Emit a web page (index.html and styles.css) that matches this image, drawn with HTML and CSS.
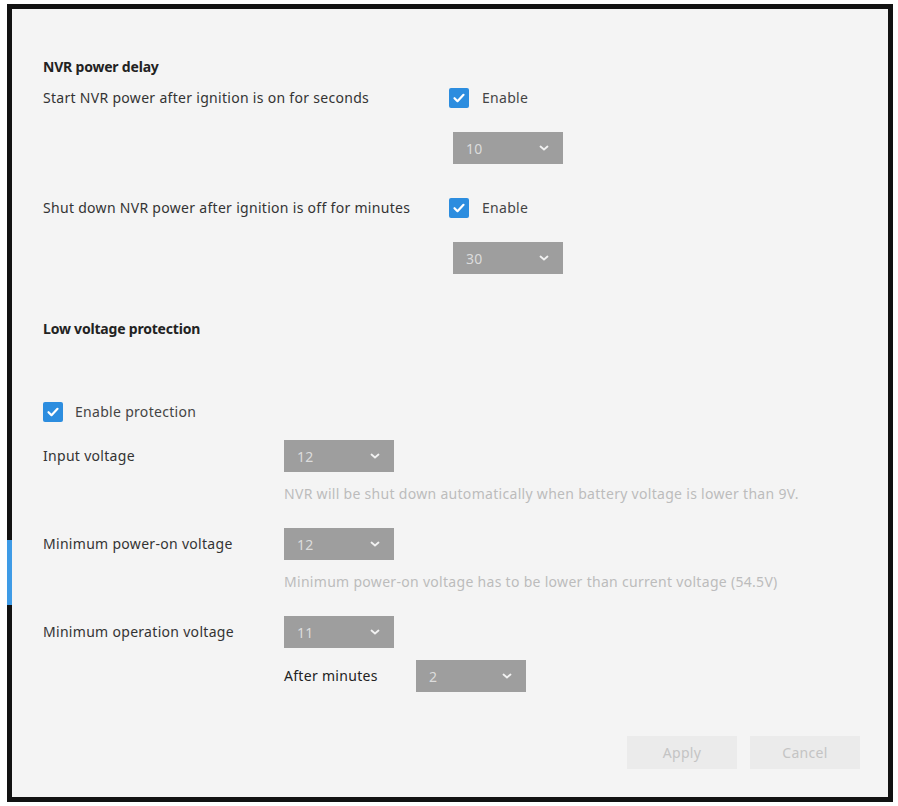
FILE: index.html
```html
<html>
	<head>
		<link rel="stylesheet" href="styles.css">
	</head>
<body>
	<div class="frame">
		<span class="frame-marker"></span>
		<div class="panel">

			<h3 class="section-title">NVR power delay</h3>
			<div class="delay-grid">
				<span class="field-label">Start NVR power after ignition is on for seconds</span>
				<label class="check"><span class="checkbox"><svg viewBox="0 0 20 20" width="20" height="20"><path d="M5.5 10.2l3 3 6-6.4" fill="none" stroke="#fff" stroke-width="2.2" stroke-linecap="round" stroke-linejoin="round"/></svg></span>Enable</label>
				<span></span>
				<div class="select delay-select"><span>10</span><svg class="chevron" viewBox="0 0 10 6" width="10" height="6"><path d="M1.5 1.5l3.5 3 3.5-3" fill="none" stroke="#f2f2f2" stroke-width="1.8" stroke-linecap="round"/></svg></div>

				<span class="field-label row-gap">Shut down NVR power after ignition is off for minutes</span>
				<label class="check row-gap"><span class="checkbox"><svg viewBox="0 0 20 20" width="20" height="20"><path d="M5.5 10.2l3 3 6-6.4" fill="none" stroke="#fff" stroke-width="2.2" stroke-linecap="round" stroke-linejoin="round"/></svg></span>Enable</label>
				<span></span>
				<div class="select delay-select"><span>30</span><svg class="chevron" viewBox="0 0 10 6" width="10" height="6"><path d="M1.5 1.5l3.5 3 3.5-3" fill="none" stroke="#f2f2f2" stroke-width="1.8" stroke-linecap="round"/></svg></div>
			</div>

			<h3 class="section-title voltage-title">Low voltage protection</h3>
			<label class="check protection-check"><span class="checkbox"><svg viewBox="0 0 20 20" width="20" height="20"><path d="M5.5 10.2l3 3 6-6.4" fill="none" stroke="#fff" stroke-width="2.2" stroke-linecap="round" stroke-linejoin="round"/></svg></span>Enable protection</label>

			<div class="voltage-grid">
				<span class="field-label">Input voltage</span>
				<div class="select"><span>12</span><svg class="chevron" viewBox="0 0 10 6" width="10" height="6"><path d="M1.5 1.5l3.5 3 3.5-3" fill="none" stroke="#f2f2f2" stroke-width="1.8" stroke-linecap="round"/></svg></div>
				<span></span>
				<div class="hint">NVR will be shut down automatically when battery voltage is lower than 9V.</div>

				<span class="field-label next-row">Minimum power-on voltage</span>
				<div class="select next-row"><span>12</span><svg class="chevron" viewBox="0 0 10 6" width="10" height="6"><path d="M1.5 1.5l3.5 3 3.5-3" fill="none" stroke="#f2f2f2" stroke-width="1.8" stroke-linecap="round"/></svg></div>
				<span></span>
				<div class="hint">Minimum power-on voltage has to be lower than current voltage (54.5V)</div>

				<span class="field-label next-row">Minimum operation voltage</span>
				<div class="select next-row"><span>11</span><svg class="chevron" viewBox="0 0 10 6" width="10" height="6"><path d="M1.5 1.5l3.5 3 3.5-3" fill="none" stroke="#f2f2f2" stroke-width="1.8" stroke-linecap="round"/></svg></div>
				<span></span>
				<div class="after-row">
					<span class="field-label after-label">After minutes</span>
					<div class="select"><span>2</span><svg class="chevron" viewBox="0 0 10 6" width="10" height="6"><path d="M1.5 1.5l3.5 3 3.5-3" fill="none" stroke="#f2f2f2" stroke-width="1.8" stroke-linecap="round"/></svg></div>
				</div>
			</div>

			<div class="buttons">
				<button class="btn">Apply</button>
				<button class="btn">Cancel</button>
			</div>

		</div>
	</div>
</body>
</html>
```

FILE: styles.css
```css
	body {
		margin: 0;
		background: #fff;
		font-family: "Noto Sans", "Open Sans", sans-serif;
		font-size: 14px;
		letter-spacing: 0.3px;
		color: #333;
	}

	.frame {
		position: relative;
		margin: 4px 0 0 7px;
		width: 876px;
		height: 788px;
		border: 5px solid #121212;
		background: #f4f4f4;
	}
	/* blue marker laid over the left border */
	.frame-marker {
		position: absolute;
		left: -5px;
		top: 531px;
		width: 5px;
		height: 65px;
		background: #3e9be6;
	}

	.panel {
		padding: 48px 31px 0 31px;
	}

	.section-title {
		margin: 0;
		font-size: 14px;
		font-weight: bold;
		line-height: 20px;
		color: #222;
		letter-spacing: -0.2px;
	}

	.field-label {
		line-height: 20px;
		color: #333;
	}

	.check {
		display: flex;
		align-items: center;
		line-height: 20px;
		color: #444;
	}
	.checkbox {
		display: inline-block;
		width: 20px;
		height: 20px;
		margin-right: 13px;
		border-radius: 2px;
		background: #2c8ddf;
	}
	.checkbox svg {
		display: block;
	}
	.protection-check .checkbox {
		margin-right: 12px;
	}

	.select {
		display: flex;
		align-items: center;
		justify-content: space-between;
		box-sizing: border-box;
		width: 110px;
		height: 32px;
		padding: 0 13px;
		background: #9e9e9e;
		color: #dcdcdc;
	}
	.chevron {
		display: block;
		margin-right: 1px;
	}

/* NVR power delay */
	.delay-grid {
		display: grid;
		grid-template-columns: 406px auto;
		align-items: center;
		justify-items: start;
		margin-top: 11px;
	}
	.delay-select {
		margin: 24px 0 0 4px;
	}
	.row-gap {
		margin-top: 34px;
	}

/* Low voltage protection */
	.voltage-title {
		margin-top: 45px;
	}
	.protection-check {
		margin-top: 63px;
	}

	.voltage-grid {
		display: grid;
		grid-template-columns: 241px auto;
		align-items: center;
		justify-items: start;
		margin-top: 18px;
	}
	.hint {
		margin-top: 12px;
		line-height: 20px;
		color: #bcbcbc;
	}
	.next-row {
		margin-top: 24px;
	}
	.after-row {
		display: flex;
		align-items: center;
		margin-top: 12px;
	}
	.after-label {
		width: 132px;
		color: #222;
	}

	.buttons {
		display: flex;
		justify-content: flex-end;
		gap: 13px;
		margin: 44px -3px 0 0;
	}
	.btn {
		width: 110px;
		height: 33px;
		border: none;
		background: #ebebeb;
		color: #c4c4c4;
		font-family: inherit;
		font-size: 14px;
		letter-spacing: 0.3px;
	}
```
